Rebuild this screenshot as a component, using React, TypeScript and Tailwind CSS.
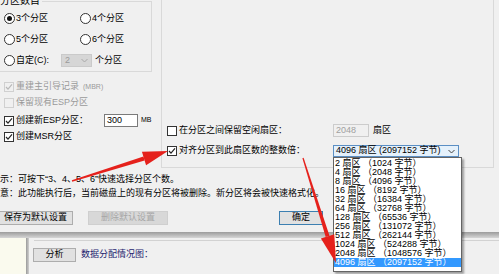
import React from "react";

function Radio({ on }: { on?: boolean }) {
  return (
    <span className="w-[11px] h-[11px] rounded-full border border-[#333] bg-white flex items-center justify-center shrink-0">
      {on && <span className="w-[5px] h-[5px] rounded-full bg-[#111]" />}
    </span>
  );
}

function Check({ on, disabled }: { on?: boolean; disabled?: boolean }) {
  return (
    <span
      className={
        disabled
          ? "w-[10px] h-[10px] border border-[#d0d0d0] bg-[#f0f0f0] flex items-center justify-center shrink-0"
          : "w-[10px] h-[10px] border border-[#333] bg-white flex items-center justify-center shrink-0"
      }
    >
      {on && (
        <svg width="8" height="8" viewBox="0 0 8 8">
          <path d="M1 4 L3 6.2 L7 1.4" fill="none" stroke={disabled ? "#b8b8b8" : "#222"} strokeWidth="1.2" />
        </svg>
      )}
    </span>
  );
}

function Chevron({ color }: { color: string }) {
  return (
    <svg width="7" height="5" viewBox="0 0 7 5">
      <path d="M0.5 1 L3.5 4 L6.5 1" fill="none" stroke={color} strokeWidth="1" />
    </svg>
  );
}

const sizes = [
  ["2", "1024"],
  ["4", "2048"],
  ["8", "4096"],
  ["16", "8192"],
  ["32", "16384"],
  ["64", "32768"],
  ["128", "65536"],
  ["256", "131072"],
  ["512", "262144"],
  ["1024", "524288"],
  ["2048", "1048576"],
  ["4096", "2097152"],
];

export default function App() {
  return (
    <div className="relative w-[499px] h-[274px] overflow-hidden bg-[#f0f0f0] text-[9px] text-black font-['Liberation_Sans','Noto_Sans_CJK_SC',sans-serif]">
      {/* dialog */}
      <div className="h-[232px] flex flex-col">
        <div className="flex h-[168px]">
          {/* left column */}
          <div className="w-[161px] flex flex-col">
            <div className="relative mt-[1px] w-[152px] h-[71px] border-t border-r border-b border-[#d9d9d9] pt-[10px] pl-[4px] flex flex-col gap-[8px]">
              <span className="absolute -top-[7px] left-0 bg-[#f0f0f0] pr-[2px] text-[10px] leading-[12px]">分区数目</span>
              <div className="h-[13px] flex items-center">
                <div className="w-[76px] flex items-center gap-[1px]">
                  <Radio on />
                  <span>3个分区</span>
                </div>
                <div className="flex items-center gap-[1px]">
                  <Radio />
                  <span>4个分区</span>
                </div>
              </div>
              <div className="h-[13px] flex items-center">
                <div className="w-[76px] flex items-center gap-[1px]">
                  <Radio />
                  <span>5个分区</span>
                </div>
                <div className="flex items-center gap-[1px]">
                  <Radio />
                  <span>6个分区</span>
                </div>
              </div>
              <div className="h-[13px] flex items-center">
                <div className="w-[57px] flex items-center gap-[1px]">
                  <Radio />
                  <span>自定(C):</span>
                </div>
                <div className="w-[31px] h-[13px] bg-[#d6d6d6] border border-[#cacaca] flex items-center justify-between px-[3px] text-[#9a9a9a]">
                  <span>2</span>
                  <Chevron color="#a8a8a8" />
                </div>
                <span className="ml-[3px]">个分区</span>
              </div>
            </div>
            <div className="mt-[9px] pl-[4px] flex flex-col">
              <div className="h-[12px] flex items-center gap-[2px] text-[#9a9a9a]">
                <Check on disabled />
                <span>重建主引导记录</span>
                <span className="text-[7px] ml-[2px]">(MBR)</span>
              </div>
              <div className="mt-[4px] h-[12px] flex items-center gap-[2px] text-[#9a9a9a]">
                <Check disabled />
                <span>保留现有ESP分区</span>
              </div>
              <div className="mt-[5px] h-[13px] flex items-center">
                <div className="w-[100px] flex items-center gap-[2px]">
                  <Check on />
                  <span>创建新ESP分区：</span>
                </div>
                <div className="w-[34px] h-[13px] bg-white border border-[#7a7a7a] flex items-center px-[2px]">300</div>
                <span className="ml-[3px] text-[7px]">MB</span>
              </div>
              <div className="mt-[4px] h-[12px] flex items-center gap-[2px]">
                <Check on />
                <span>创建MSR分区</span>
              </div>
            </div>
          </div>
          {/* right group */}
          <div className="w-[333px] h-[168px] border-l border-r border-b border-[#d9d9d9] flex flex-col justify-end pb-[10px] pl-[5px]">
            <div className="h-[13px] flex items-center">
              <div className="w-[166px] flex items-center gap-[2px]">
                <Check />
                <span>在分区之间保留空闲扇区：</span>
              </div>
              <div className="w-[36px] h-[13px] bg-[#f0f0f0] border border-[#cccccc] flex items-center px-[2px] text-[#a0a0a0]">2048</div>
              <span className="ml-[4px]">扇区</span>
            </div>
            <div className="mt-[8px] h-[12px] flex items-center">
              <div className="w-[166px] flex items-center gap-[2px]">
                <Check on />
                <span>对齐分区到此扇区数的整数倍：</span>
              </div>
              <div className="w-[126px] h-[12px] bg-[#e5f1fb] border border-[#5b8fc4] flex items-center justify-between pl-[2px] pr-[3px]">
                <span>4096 扇区 (2097152 字节)</span>
                <Chevron color="#444" />
              </div>
            </div>
          </div>
        </div>
        {/* hints */}
        <div className="mt-[4px] leading-[14px]">
          <div>示：可按下“3、4、5、6”快速选择分区个数。</div>
          <div>意：此功能执行后，当前磁盘上的现有分区将被删除。新分区将会被快速格式化。</div>
        </div>
        {/* buttons */}
        <div className="mt-[11px] flex items-center h-[14px]">
          <div className="-ml-[2px] w-[75px] h-[14px] bg-[#e1e1e1] border border-[#adadad] flex items-center justify-center">保存为默认设置</div>
          <div className="ml-[15px] w-[80px] h-[14px] bg-[#d8d8d8] border border-[#cfcfcf] flex items-center justify-center text-[#a6a6a6]">删除默认设置</div>
          <div className="ml-[111px] w-[44px] h-[14px] bg-[#e1e1e1] border border-[#3c7fb1] flex items-center justify-center">确定</div>
        </div>
      </div>
      {/* dialog bottom edge */}
      <div className="h-[6px] bg-gradient-to-b from-[#9c9c9c] to-[#d6d6d6]" />
      {/* lower window */}
      <div className="flex h-[36px]">
        <div className="w-[26px] bg-[#fafaee]" />
        <div className="w-[3px] bg-gradient-to-r from-[#9a9a9a] to-[#d0d0d0]" />
        <div className="flex-1 flex flex-col">
          <div className="mt-[2px] ml-[5px] border-t border-[#d2d2d2] border-b-white h-0" />
          <div className="mt-[7px] ml-[4px] flex items-center gap-[5px]">
            <div className="w-[43px] h-[14px] bg-[#e1e1e1] border border-[#adadad] flex items-center justify-center">分析</div>
            <span className="text-[#1d1d6e]">数据分配情况图：</span>
          </div>
        </div>
      </div>

      {/* open dropdown list */}
      <div className="absolute left-[333px] top-[157px] w-[129px] h-[115px] bg-white border border-[#646464] shadow-[2px_2px_2px_rgba(0,0,0,0.35)] pt-[1px]">
        {sizes.map(([s, b], i) => (
          <div
            key={s}
            className={
              i === sizes.length - 1
                ? "h-[9px] leading-[9px] pl-[1px] bg-[#3399ff] text-white whitespace-nowrap"
                : "h-[9px] leading-[9px] pl-[1px] whitespace-nowrap"
            }
          >
            {s} 扇区 （{b} 字节）
          </div>
        ))}
      </div>

      {/* red annotation arrows */}
      <svg className="absolute left-0 top-0 pointer-events-none" width="499" height="274" viewBox="0 0 499 274">
        <polygon points="72.2,181.8 144.6,160.4 143.4,156.6 71.8,180.2" fill="#e5211c" />
        <polygon points="168,151 146.1,165.2 141.9,151.8" fill="#e5211c" />
        <polygon points="303.6,157.8 329.5,235.7 325.7,236.9 302.4,158.2" fill="#e5211c" />
        <polygon points="336,263 334.3,234.2 320.9,238.4" fill="#e5211c" />
      </svg>
    </div>
  );
}
